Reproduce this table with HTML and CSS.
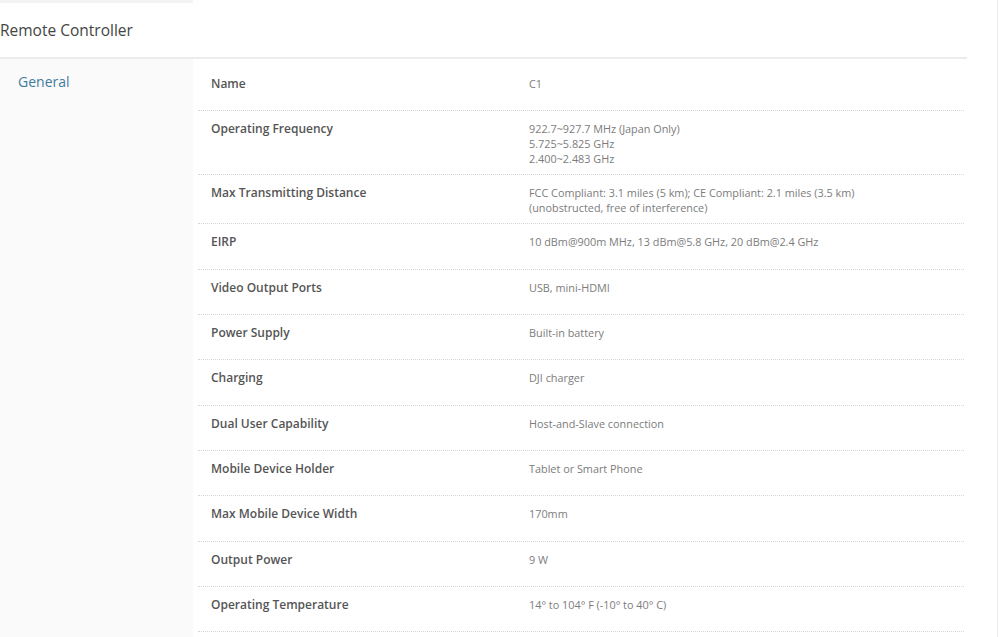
FILE: index.html
```html
<!DOCTYPE html>
<html>
<head>
<meta charset="utf-8">
<link rel="stylesheet" href="styles.css">
</head>
<body>
<div class="page">
  <div class="topstrip"></div>
  <div class="section-title">Remote Controller</div>
  <div class="content">
    <div class="sidebar"><span class="cat">General</span></div>
    <div class="specs">
      <div class="row"><div class="label">Name</div><div class="value">C1</div></div>
      <div class="row"><div class="label">Operating Frequency</div><div class="value">922.7~927.7 MHz (Japan Only)<br>5.725~5.825 GHz<br>2.400~2.483 GHz</div></div>
      <div class="row"><div class="label">Max Transmitting Distance</div><div class="value">FCC Compliant: 3.1 miles (5 km); CE Compliant: 2.1 miles (3.5 km)<br>(unobstructed, free of interference)</div></div>
      <div class="row"><div class="label">EIRP</div><div class="value">10 dBm@900m MHz, 13 dBm@5.8 GHz, 20 dBm@2.4 GHz</div></div>
      <div class="row"><div class="label">Video Output Ports</div><div class="value">USB, mini-HDMI</div></div>
      <div class="row"><div class="label">Power Supply</div><div class="value">Built-in battery</div></div>
      <div class="row"><div class="label">Charging</div><div class="value">DJI charger</div></div>
      <div class="row"><div class="label">Dual User Capability</div><div class="value">Host-and-Slave connection</div></div>
      <div class="row"><div class="label">Mobile Device Holder</div><div class="value">Tablet or Smart Phone</div></div>
      <div class="row"><div class="label">Max Mobile Device Width</div><div class="value">170mm</div></div>
      <div class="row"><div class="label">Output Power</div><div class="value">9 W</div></div>
      <div class="row"><div class="label">Operating Temperature</div><div class="value">14° to 104° F (-10° to 40° C)</div></div>
    </div>
  </div>
</div>
</body>
</html>
```

FILE: styles.css
```css
html, body {
  margin: 0;
  padding: 0;
  background: #fff;
  overflow: hidden;
}
body {
  font-family: "Open Sans", "Liberation Sans", sans-serif;
}
.page {
  width: 997px;
  height: 637px;
  border-right: 1px solid #ededed;
  overflow: hidden;
}
.topstrip {
  width: 193px;
  height: 3px;
  background: #f3f3f3;
}
.section-title {
  width: 967px;
  box-sizing: border-box;
  padding: 17px 0;
  height: 56px;
  line-height: 20px;
  font-size: 15.5px;
  color: #444;
  border-bottom: 2px solid #ececec;
}
.content {
  display: flex;
  width: 967px;
  height: 600px;
}
.sidebar {
  flex: 0 0 193px;
  background: #fafafa;
  padding: 11px 0 0 18px;
  box-sizing: border-box;
}
.cat {
  font-size: 14px;
  line-height: 20px;
  color: #3f7c9c;
}
.specs {
  flex: 1;
  padding: 7px 3px 0 5px;
}
.row {
  display: flex;
  box-sizing: border-box;
  min-height: 45.33px;
  padding: 10px 0 8px;
  border-bottom: 1px dotted #d6d6d6;
  line-height: 15px;
}
.label {
  flex: 0 0 318px;
  padding-left: 13px;
  font-size: 12px;
  font-weight: 600;
  color: #555;
}
.value {
  flex: 1;
  font-size: 10.85px;
  font-weight: 400;
  color: #7c7c7c;
}
```
